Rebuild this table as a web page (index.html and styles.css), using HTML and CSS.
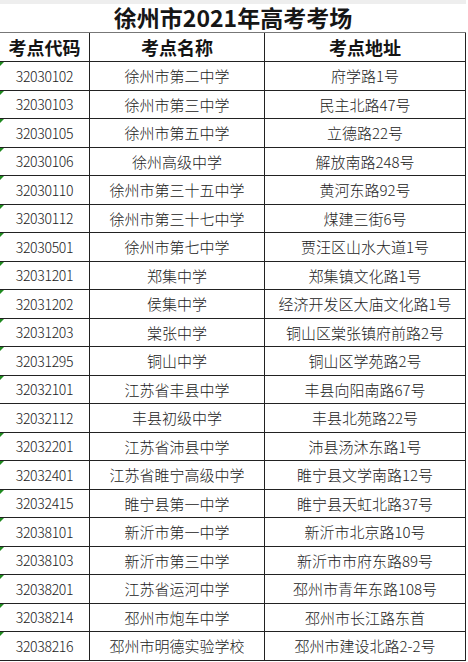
FILE: index.html
```html
<!DOCTYPE html>
<html lang="zh-CN">
<head>
<meta charset="utf-8">
<title>徐州市2021年高考考场</title>
<link rel="stylesheet" href="styles.css">
</head>
<body>
<div class="page">
  <div class="title">徐州市2021年高考考场</div>
  <div class="sheet">
    <div class="cell head">考点代码</div>
    <div class="cell head">考点名称</div>
    <div class="cell head">考点地址</div>

    <div class="cell code flag">32030102</div><div class="cell">徐州市第二中学</div><div class="cell">府学路1号</div>
    <div class="cell code flag">32030103</div><div class="cell">徐州市第三中学</div><div class="cell">民主北路47号</div>
    <div class="cell code flag">32030105</div><div class="cell">徐州市第五中学</div><div class="cell">立德路22号</div>
    <div class="cell code flag">32030106</div><div class="cell">徐州高级中学</div><div class="cell">解放南路248号</div>
    <div class="cell code flag">32030110</div><div class="cell">徐州市第三十五中学</div><div class="cell">黄河东路92号</div>
    <div class="cell code flag">32030112</div><div class="cell">徐州市第三十七中学</div><div class="cell">煤建三街6号</div>
    <div class="cell code flag">32030501</div><div class="cell">徐州市第七中学</div><div class="cell">贾汪区山水大道1号</div>
    <div class="cell code flag">32031201</div><div class="cell">郑集中学</div><div class="cell">郑集镇文化路1号</div>
    <div class="cell code flag">32031202</div><div class="cell">侯集中学</div><div class="cell">经济开发区大庙文化路1号</div>
    <div class="cell code flag">32031203</div><div class="cell">棠张中学</div><div class="cell">铜山区棠张镇府前路2号</div>
    <div class="cell code flag">32031295</div><div class="cell">铜山中学</div><div class="cell">铜山区学苑路2号</div>
    <div class="cell code flag">32032101</div><div class="cell">江苏省丰县中学</div><div class="cell">丰县向阳南路67号</div>
    <div class="cell code">32032112</div><div class="cell">丰县初级中学</div><div class="cell">丰县北苑路22号</div>
    <div class="cell code flag">32032201</div><div class="cell">江苏省沛县中学</div><div class="cell">沛县汤沐东路1号</div>
    <div class="cell code flag">32032401</div><div class="cell">江苏省睢宁高级中学</div><div class="cell">睢宁县文学南路12号</div>
    <div class="cell code flag">32032415</div><div class="cell">睢宁县第一中学</div><div class="cell">睢宁县天虹北路37号</div>
    <div class="cell code flag">32038101</div><div class="cell">新沂市第一中学</div><div class="cell">新沂市北京路10号</div>
    <div class="cell code flag">32038103</div><div class="cell">新沂市第三中学</div><div class="cell">新沂市市府东路89号</div>
    <div class="cell code flag">32038201</div><div class="cell">江苏省运河中学</div><div class="cell">邳州市青年东路108号</div>
    <div class="cell code flag">32038214</div><div class="cell">邳州市炮车中学</div><div class="cell">邳州市长江路东首</div>
    <div class="cell code flag">32038216</div><div class="cell">邳州市明德实验学校</div><div class="cell">邳州市建设北路2-2号</div>
  </div>
</div>
</body>
</html>
```

FILE: styles.css
```css
html, body {
  margin: 0;
  padding: 0;
  background: #ffffff;
}

.page {
  width: 468px;
  font-family: "Noto Sans CJK SC", "Noto Sans", sans-serif;
  color: #222222;
}

.title {
  box-sizing: border-box;
  width: 466px;
  height: 32px;
  border-top: 4px solid #eeeeee;
  text-align: center;
  font-size: 23px;
  font-weight: 700;
  line-height: 27px;
  color: #161616;
}

.sheet {
  display: grid;
  grid-template-columns: 90px 175px 201px;
  grid-template-rows: 29px;
  grid-auto-rows: 28.5px;
  border-top: 1px solid #777777;
  width: 466px;
}

.cell {
  box-sizing: border-box;
  border-right: 1px solid #222222;
  border-bottom: 1px solid #222222;
  display: flex;
  align-items: center;
  justify-content: center;
  font-size: 15px;
  font-weight: 300;
  white-space: nowrap;
  overflow: hidden;
  position: relative;
  line-height: 1;
}

.head {
  font-size: 18px;
  font-weight: 700;
  color: #141414;
}

.code {
  font-size: 14px;
  letter-spacing: -0.3px;
}

.flag::before {
  content: "";
  position: absolute;
  left: 0;
  top: 0;
  width: 0;
  height: 0;
  border-top: 4px solid #1f8a1f;
  border-right: 4px solid transparent;
}
```
